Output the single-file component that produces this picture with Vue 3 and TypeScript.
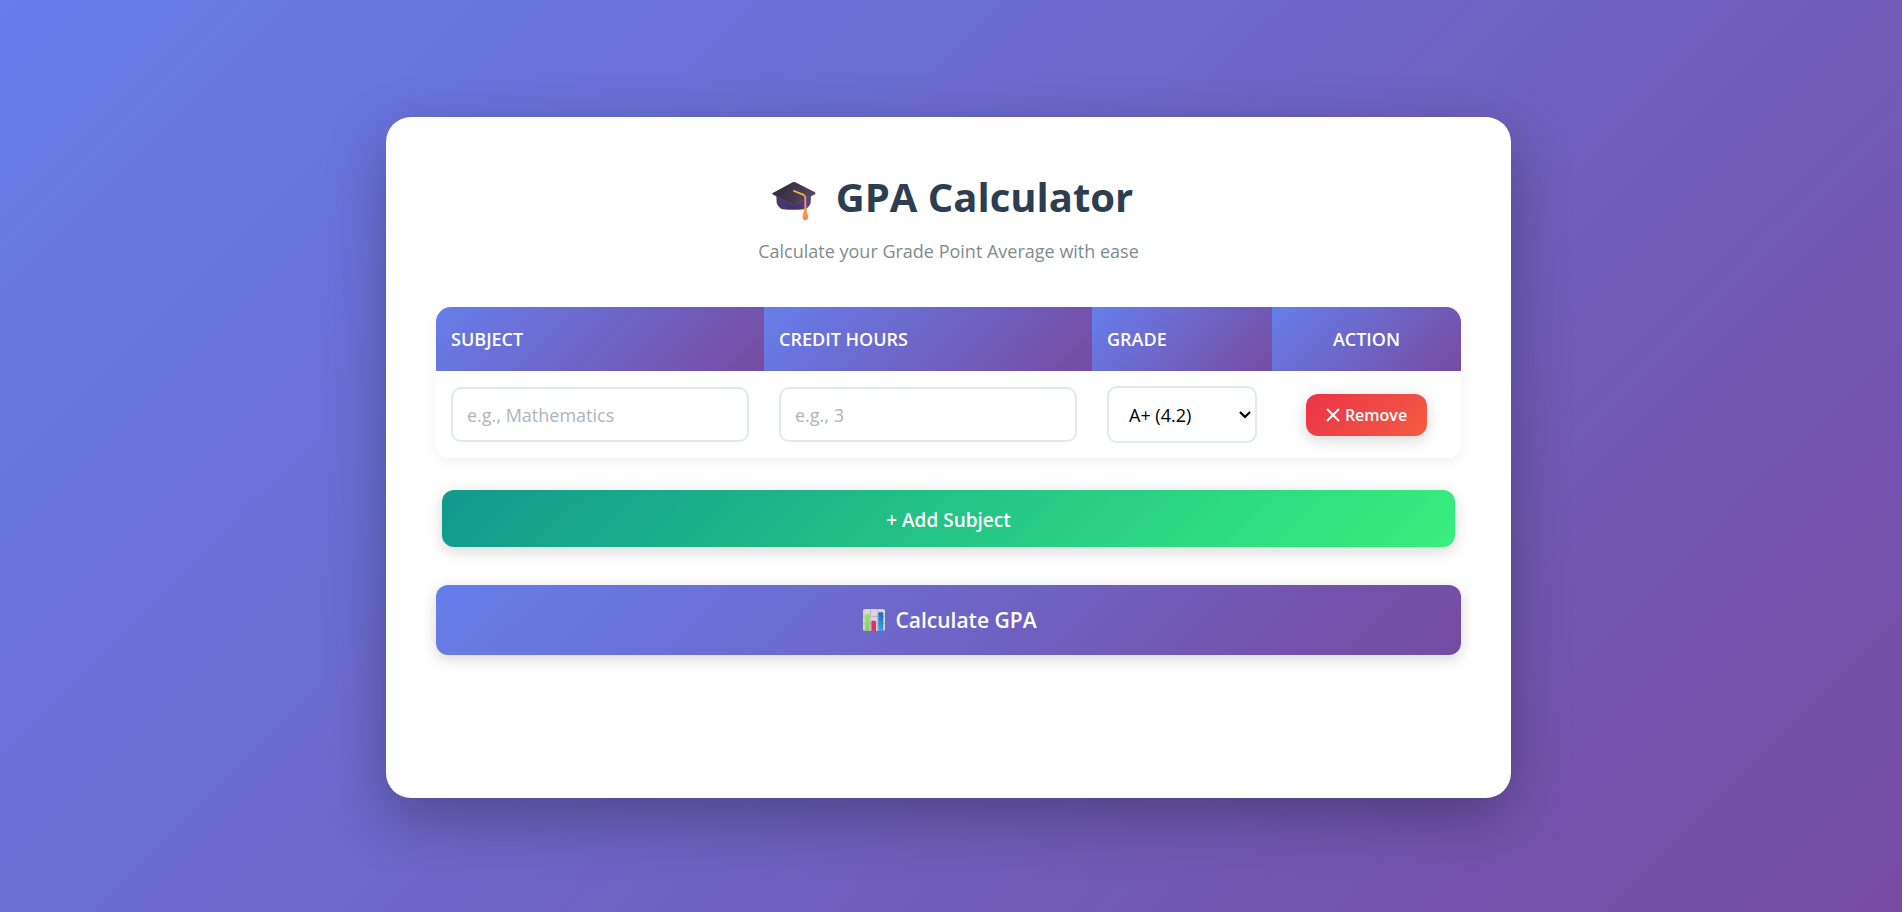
<script setup lang="ts">
import { ref } from 'vue'

interface Subject {
  id: number
  name: string
  credits: string
  grade: string
}

const grades: [string, string][] = [
  ['A+', '4.2'],
  ['A', '4.0'],
  ['B+', '3.5'],
  ['B', '3.0'],
  ['C+', '2.5'],
  ['C', '2.0'],
  ['D', '1.0'],
  ['F', '0.0'],
]

let nextId = 1
const makeSubject = (): Subject => ({ id: nextId++, name: '', credits: '', grade: '4.2' })

const subjects = ref<Subject[]>([makeSubject()])
const result = ref('')

function addSubject() {
  subjects.value.push(makeSubject())
}

function removeSubject(id: number) {
  subjects.value = subjects.value.filter((s) => s.id !== id)
}

function calculate() {
  let points = 0
  let credits = 0
  for (const s of subjects.value) {
    const hours = Number(s.credits) || 0
    points += hours * Number(s.grade)
    credits += hours
  }
  result.value = credits > 0 ? `Your GPA: ${(points / credits).toFixed(2)}` : ''
}
</script>

<template>
  <div class="page">
    <main class="card">
      <header class="heading">
        <h1>
          <svg class="cap" viewBox="0 0 156 120" aria-hidden="true">
            <defs>
              <linearGradient id="cap-base" x1="0" y1="0" x2="1" y2="0">
                <stop offset="0" stop-color="#4b3a72" />
                <stop offset="0.5" stop-color="#43306b" />
                <stop offset="1" stop-color="#5d3f8e" />
              </linearGradient>
              <linearGradient id="cap-board" x1="0" y1="0.3" x2="1" y2="0.6">
                <stop offset="0" stop-color="#352c40" />
                <stop offset="0.55" stop-color="#42374c" />
                <stop offset="1" stop-color="#5b4a6c" />
              </linearGradient>
              <linearGradient id="cap-tassel" x1="0" y1="0" x2="0" y2="1">
                <stop offset="0" stop-color="#e9a23c" />
                <stop offset="0.5" stop-color="#f79a4a" />
                <stop offset="1" stop-color="#ff7a5c" />
              </linearGradient>
            </defs>
            <path d="M37 44 L38 66 Q41 77 51 83 Q58 86 88 86 Q118 86 127 83 Q137 77 140 66 L141 44 Z" fill="url(#cap-base)" />
            <path d="M25 37 L86 4 Q90 2 94 4 L153 34 Q156 36 153 39 L92 71 Q89 73 86 71 L26 40 Q23 38 25 37 Z" fill="url(#cap-board)" />
            <path d="M26 40 L86 71 Q89 73 92 71 L153 39" fill="none" stroke="#67547a" stroke-width="1.5" />
            <path d="M90 30 L117 41 Q124 44 124 52 L124 90" fill="none" stroke="#eba63f" stroke-width="5.5" stroke-linecap="round" stroke-linejoin="round" />
            <path d="M90 29 L117 40" fill="none" stroke="#ffc657" stroke-width="2" stroke-linecap="round" />
            <path d="M120 83 Q124 80 128 83 Q130 86 128 90 Q134 103 132 112 Q131 118 124 118 Q117 118 116 112 Q114 103 120 90 Q118 86 120 83 Z" fill="url(#cap-tassel)" />
          </svg>
          <span>GPA Calculator</span>
        </h1>
        <p>Calculate your Grade Point Average with ease</p>
      </header>

      <table class="subjects">
        <thead>
          <tr>
            <th class="wide" scope="col">SUBJECT</th>
            <th class="wide" scope="col">CREDIT HOURS</th>
            <th class="grade" scope="col">GRADE</th>
            <th class="action" scope="col">ACTION</th>
          </tr>
        </thead>
        <tbody>
          <tr v-for="s in subjects" :key="s.id">
            <td><input v-model="s.name" type="text" placeholder="e.g., Mathematics" aria-label="Subject" /></td>
            <td><input v-model="s.credits" type="text" inputmode="numeric" placeholder="e.g., 3" aria-label="Credit hours" /></td>
            <td>
              <div class="picker">
                <select v-model="s.grade" aria-label="Grade">
                  <option v-for="[letter, value] in grades" :key="letter" :value="value">{{ letter }} ({{ value }})</option>
                </select>
                <svg class="chevron" viewBox="0 0 12 8" aria-hidden="true">
                  <path d="M1 1 L6 6 L11 1" fill="none" stroke="currentColor" stroke-width="2.2" />
                </svg>
              </div>
            </td>
            <td class="action">
              <button class="remove" type="button" @click="removeSubject(s.id)">
                <svg class="cross" viewBox="0 0 14 14" aria-hidden="true">
                  <path d="M1 1 L13 13 M13 1 L1 13" fill="none" stroke="currentColor" stroke-width="2" />
                </svg>
                <span>Remove</span>
              </button>
            </td>
          </tr>
        </tbody>
      </table>

      <button class="add" type="button" @click="addSubject">+ Add Subject</button>
      <button class="calculate" type="button" @click="calculate">
        <svg class="chart" viewBox="0 0 75 66" aria-hidden="true">
          <defs>
            <linearGradient id="bar-green" x1="0" y1="0" x2="1" y2="1">
              <stop offset="0" stop-color="#b4e35c" />
              <stop offset="1" stop-color="#6fcf6a" />
            </linearGradient>
            <linearGradient id="bar-blue" x1="0" y1="0" x2="0" y2="1">
              <stop offset="0" stop-color="#2468b8" />
              <stop offset="1" stop-color="#35a5ec" />
            </linearGradient>
          </defs>
          <rect x="9" y="0" width="66" height="66" rx="6" fill="#dcd5e2" />
          <path d="M9 22 H75 M9 44 H75 M31 0 V66 M53 0 V66" stroke="#bdb2c8" stroke-width="3" />
          <path d="M14 66 V18 Q14 15 17 15 H25 Q28 15 28 18 V66 Z" fill="url(#bar-green)" />
          <path d="M34 66 V38 Q34 35 37 35 H45 Q48 35 48 38 V66 Z" fill="#e0306c" />
          <path d="M55 66 V13 Q55 10 58 10 H67 Q70 10 70 13 V66 Z" fill="url(#bar-blue)" />
        </svg>
        <span>Calculate GPA</span>
      </button>
      <output class="result">{{ result }}</output>
    </main>
  </div>
</template>

<style>
body {
  margin: 0;
}
</style>

<style scoped>
* {
  box-sizing: border-box;
}

.page {
  min-height: 100vh;
  padding: 23px 25px 20px 20px;
  display: flex;
  align-items: center;
  justify-content: center;
  background: linear-gradient(135deg, #667eea 0%, #764ba2 100%);
  font-family: 'Open Sans', 'Noto Sans', sans-serif;
}

.card {
  width: 100%;
  max-width: 1125px;
  padding: 50px;
  display: flex;
  flex-direction: column;
  background: #fff;
  border-radius: 25px;
  box-shadow: 0 20px 60px rgba(0, 0, 0, 0.3);
}

.heading {
  margin-bottom: 40px;
  text-align: center;
}

h1 {
  margin: 0 0 9px;
  display: flex;
  align-items: center;
  justify-content: center;
  gap: 20px;
  color: #2c3e50;
  font-size: 40px;
  font-weight: 700;
  line-height: 60px;
}

.cap {
  width: 52px;
  height: 40px;
  margin-top: 8px;
}

.heading p {
  margin: 0;
  padding-bottom: 1px;
  color: #7f8c8d;
  font-size: 18px;
  line-height: 30px;
}

.subjects {
  width: 100%;
  border-collapse: separate;
  border-spacing: 0;
  border-radius: 15px;
  overflow: hidden;
  box-shadow: 0 5px 15px rgba(0, 0, 0, 0.05);
}

th {
  height: 64px;
  padding: 0 15px;
  background: linear-gradient(135deg, #667eea 0%, #764ba2 100%);
  color: #fff;
  font-size: 18px;
  font-weight: 600;
  line-height: 24px;
  text-align: left;
}

th.wide {
  width: 32%;
}

th.grade {
  width: 180px;
}

td {
  padding: 15px;
  border-bottom: 1px solid #f0f0f0;
}

th.action,
td.action {
  text-align: center;
}

input,
select {
  display: block;
  border: 2px solid #e2e8f0;
  border-radius: 10px;
  background: #fff;
  color: #000;
  font-family: inherit;
  font-size: 18px;
}

input {
  width: 100%;
  height: 55px;
  padding: 0 14px;
}

input::placeholder {
  color: #adb5bd;
}

.picker {
  position: relative;
  width: 150px;
}

select {
  width: 100%;
  height: 57px;
  padding: 0 20px;
  appearance: none;
}

.chevron {
  position: absolute;
  top: 25px;
  right: 6px;
  width: 12px;
  height: 8px;
  color: #000;
  pointer-events: none;
}

button {
  border: none;
  border-radius: 12px;
  color: #fff;
  font-family: inherit;
  font-weight: 600;
  cursor: pointer;
  box-shadow: 0 4px 15px rgba(0, 0, 0, 0.16);
}

.remove {
  height: 42px;
  padding: 0 20px;
  display: inline-flex;
  align-items: center;
  gap: 5px;
  vertical-align: middle;
  background: linear-gradient(135deg, #eb3349 0%, #f45c43 100%);
  font-size: 16px;
}

.cross {
  width: 14px;
  height: 14px;
}

.add {
  height: 57px;
  margin: 31px 6px 0;
  padding-top: 3px;
  background: linear-gradient(135deg, #11998e 0%, #38ef7d 100%);
  font-size: 19px;
}

.calculate {
  height: 70px;
  margin-top: 38px;
  display: flex;
  align-items: center;
  justify-content: center;
  gap: 10px;
  background: linear-gradient(135deg, #667eea 0%, #764ba2 100%);
  font-size: 21px;
}

.chart {
  width: 25px;
  height: 22px;
}

.result {
  min-height: 93px;
  padding-top: 30px;
  color: #2c3e50;
  font-size: 24px;
  font-weight: 700;
  text-align: center;
}
</style>
